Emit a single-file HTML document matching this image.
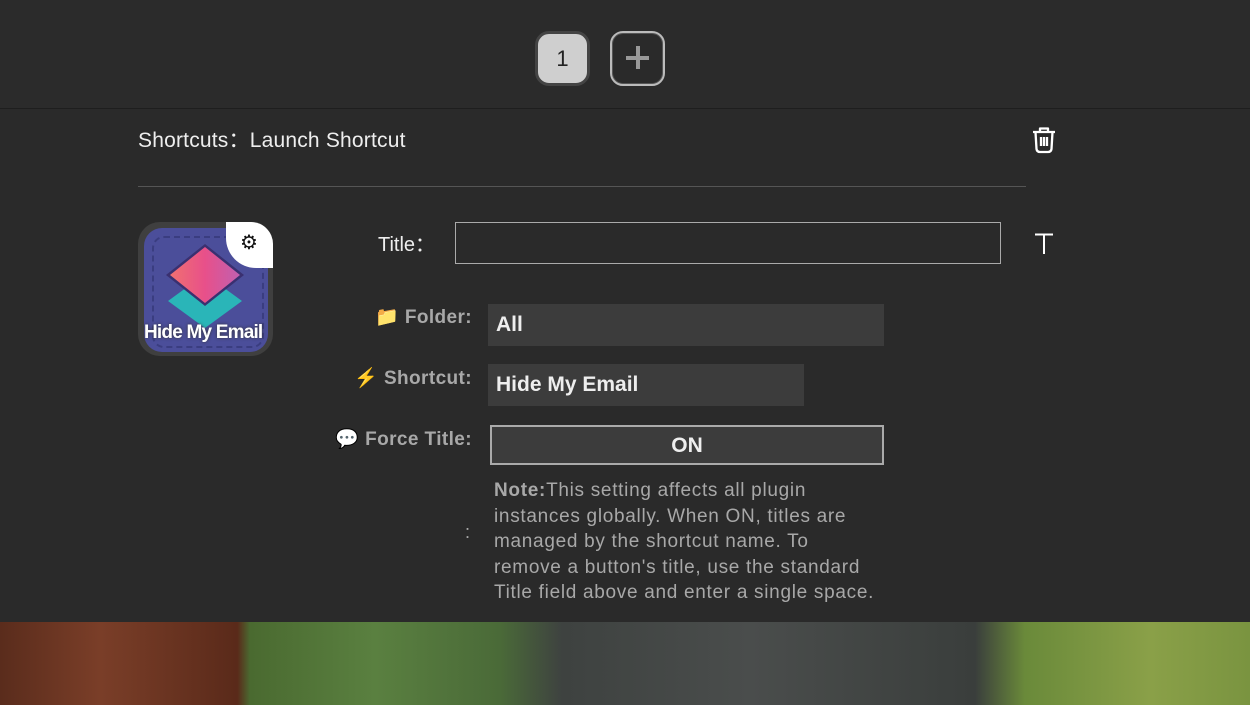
<!DOCTYPE html>
<html><head><style>
body{margin:0;width:1250px;height:705px;overflow:hidden;background:#2a2a2a;font-family:"Liberation Sans",sans-serif;position:relative}
.a{position:absolute}
.lbl{color:#a8a8a8;font-weight:bold;font-size:19px;text-align:right;width:200px;letter-spacing:0.4px}
.box{background:#3c3c3c;color:#eee;font-weight:bold;font-size:21px;box-sizing:border-box;padding-left:8px;line-height:42px}
</style></head><body>
<div class="a" style="left:0;top:0;width:1250px;height:108px;background:#2b2b2b;border-bottom:1px solid #1e1e1e"></div>
<div class="a" style="left:535px;top:31px;width:55px;height:55px;box-sizing:border-box;border:3px solid #444;border-radius:14px;background:#cfcfcf;color:#222;font-size:22px;text-align:center;line-height:49px">1</div>
<div class="a" style="left:610px;top:31px;width:55px;height:55px;box-sizing:border-box;border:2px solid #bbb;box-shadow:inset 0 0 0 1px #555;border-radius:13px;background:#2a2a2a"></div>
<div class="a" style="left:626px;top:56px;width:23px;height:4px;background:#999"></div>
<div class="a" style="left:636px;top:46px;width:4px;height:23px;background:#999"></div>
<div class="a" style="left:138px;top:124px;color:#eee;font-size:21px;letter-spacing:0.2px">Shortcuts：Launch Shortcut</div>
<svg class="a" style="left:1030px;top:125px" width="28" height="30" viewBox="0 0 28 30"><path d="M3 7H25M10 7V3.5H18V7M5.5 7L6.5 24Q7 27 10 27H18Q21 27 21.5 24L22.5 7M11 12V21M14 12V21M17 12V21" stroke="#fff" stroke-width="2.3" fill="none" stroke-linejoin="round"/></svg>
<div class="a" style="left:138px;top:186px;width:888px;height:1px;background:#555"></div>
<div class="a" style="left:138px;top:222px;width:135px;height:134px;border-radius:22px;background:#3f3f3f;overflow:hidden">
 <div class="a" style="left:6px;top:6px;width:124px;height:124px;border-radius:18px;background:#4b4e9a"></div>
 <div class="a" style="left:14px;top:14px;width:108px;height:108px;border-radius:12px;border:2px dashed #3a3d80"></div>
 <div class="a" style="left:30px;top:52px;width:74px;height:54px;background:#2ab5b8;clip-path:polygon(50% 0,100% 50%,50% 100%,0 50%);"></div>
 <div class="a" style="left:28px;top:22px;width:78px;height:62px;background:#3a3070;clip-path:polygon(50% 0,100% 50%,50% 100%,0 50%)"></div>
 <div class="a" style="left:32px;top:25px;width:70px;height:56px;background:linear-gradient(90deg,#f07070,#e8508a,#c060b0);clip-path:polygon(50% 0,100% 50%,50% 100%,0 50%)"></div>
 <div class="a" style="left:88px;top:0;width:50px;height:46px;background:#fff;border-bottom-left-radius:30px"></div>
 <div class="a" style="left:102px;top:8px;font-size:20px;color:#111">⚙</div>
 <div class="a" style="left:6px;top:100px;color:#fff;font-weight:bold;font-size:19px;white-space:nowrap;text-shadow:0 0 3px #333;letter-spacing:-0.8px">Hide My Email</div>
</div>
<div class="a" style="left:378px;top:228px;color:#eee;font-size:20px">Title：</div>
<div class="a" style="left:455px;top:222px;width:546px;height:42px;box-sizing:border-box;border:1px solid #aaa"></div>
<svg class="a" style="left:1034px;top:233px" width="20" height="22"><path d="M1 1.5H19M10 1.5V21" stroke="#fff" stroke-width="2" fill="none"/></svg>
<div class="a lbl" style="left:272px;top:305px">📁 Folder:</div>
<div class="a box" style="left:488px;top:304px;width:396px;height:42px">All</div>
<div class="a lbl" style="left:272px;top:366px"><span style="color:#f0c020">⚡</span> Shortcut:</div>
<div class="a box" style="left:488px;top:364px;width:316px;height:42px">Hide My Email</div>
<div class="a lbl" style="left:272px;top:427px">💬 Force Title:</div>
<div class="a" style="left:490px;top:425px;width:394px;height:40px;box-sizing:border-box;border:2px solid #aaa;background:#3c3c3c;color:#eee;font-weight:bold;font-size:21px;text-align:center;line-height:38px">ON</div>
<div class="a" style="left:465px;top:522px;color:#aaa;font-size:18px">:</div>
<div class="a" style="left:494px;top:478px;white-space:nowrap;color:#a8a8a8;font-size:19px;line-height:25.5px;letter-spacing:0.7px"><b>Note:</b>This setting affects all plugin<br>instances globally. When ON, titles are<br>managed by the shortcut name. To<br>remove a button's title, use the standard<br>Title field above and enter a single space.</div>
<div class="a" style="left:0;top:622px;width:1250px;height:83px;background:linear-gradient(90deg,#5a2c1c 0,#7a3e28 8%,#5a2a1a 19%,#4a6a30 20%,#5a8040 30%,#4a6a38 40%,#3e4240 45%,#4a4d4c 60%,#3a3e3c 78%,#6a8a3a 82%,#8aa048 92%,#7a9440 100%)"></div>
</body></html>
